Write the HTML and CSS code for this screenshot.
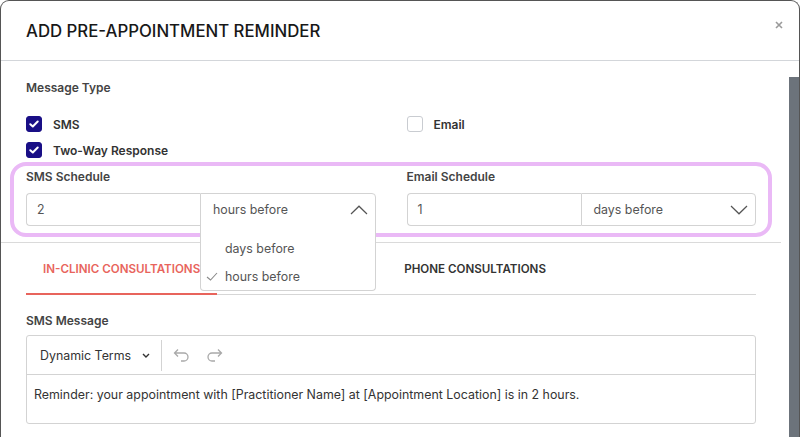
FILE: index.html
```html
<!DOCTYPE html>
<html lang="en">
<head>
    <meta charset="UTF-8">
    <meta name="viewport" content="width=device-width, initial-scale=1.0">
    <title>Add Pre-Appointment Reminder</title>
    <link rel="stylesheet" href="styles.css">
</head>
<body>
    <div class="modal">
        <div class="modal-header">
            <h1 class="modal-title">ADD PRE-APPOINTMENT REMINDER</h1>
            <button class="close" type="button" aria-label="Close">
                <svg width="8" height="8" viewBox="0 0 8 8"><path d="M1 1L7 7M7 1L1 7" stroke="#9a9a9a" stroke-width="1.6" fill="none"/></svg>
            </button>
        </div>

        <div class="modal-body">
            <div class="form">
                <div class="top">
                    <div class="field-label type-label">Message Type</div>
                    <div class="grid">
                        <div>
                            <label class="check">
                                <span class="box on"><svg width="10" height="8" viewBox="0 0 10 8"><path d="M1.3 4.2L3.8 6.5L8.7 1.5" stroke="#fff" stroke-width="2" fill="none" stroke-linecap="round" stroke-linejoin="round"/></svg></span>
                                SMS
                            </label>
                            <label class="check">
                                <span class="box on"><svg width="10" height="8" viewBox="0 0 10 8"><path d="M1.3 4.2L3.8 6.5L8.7 1.5" stroke="#fff" stroke-width="2" fill="none" stroke-linecap="round" stroke-linejoin="round"/></svg></span>
                                Two-Way Response
                            </label>
                        </div>
                        <div>
                            <label class="check">
                                <span class="box"></span>
                                Email
                            </label>
                        </div>
                    </div>

                    <!-- schedule row (highlighted) -->
                    <div class="highlight">
                        <div class="grid">
                            <div>
                                <div class="field-label sched-label">SMS Schedule</div>
                                <div class="input-group">
                                    <div class="num">2</div>
                                    <div class="select open">
                                        <span>hours before</span>
                                        <svg width="18" height="10" viewBox="0 0 18 10"><path d="M1 9L9 1.2L17 9" stroke="#555" stroke-width="1.2" fill="none"/></svg>
                                        <ul class="menu">
                                            <li>days before</li>
                                            <li>
                                                <svg class="tick" width="12" height="9" viewBox="0 0 12 9"><path d="M1 5L4.5 8L11 1" stroke="#8a8a8a" stroke-width="1.1" fill="none"/></svg>
                                                hours before
                                            </li>
                                        </ul>
                                    </div>
                                </div>
                            </div>
                            <div>
                                <div class="field-label sched-label">Email Schedule</div>
                                <div class="input-group">
                                    <div class="num">1</div>
                                    <div class="select">
                                        <span>days before</span>
                                        <svg width="18" height="10" viewBox="0 0 18 10"><path d="M1 1L9 8.8L17 1" stroke="#555" stroke-width="1.2" fill="none"/></svg>
                                    </div>
                                </div>
                            </div>
                        </div>
                    </div>
                </div>

                <div class="tabs-wrap">
                    <div class="tabs">
                        <div class="tab active">In-Clinic Consultations</div>
                        <div class="tab phone">Phone Consultations</div>
                    </div>
                </div>

                <div class="message">
                    <div class="field-label">SMS Message</div>
                    <div class="editor">
                        <div class="toolbar">
                            <div class="terms">
                                Dynamic Terms
                                <svg width="8" height="5" viewBox="0 0 8 5"><path d="M1 1L4 4L7 1" stroke="#333" stroke-width="1.4" fill="none"/></svg>
                            </div>
                            <div class="sep"></div>
                            <svg class="hist" width="17" height="14" viewBox="0 0 17 14"><path d="M5 1.5L1.5 5L5 8.5M1.5 5H11A4 4 0 0 1 11 13H8" stroke="#a9a9a9" stroke-width="1.3" fill="none"/></svg>
                            <svg class="hist redo" width="17" height="14" viewBox="0 0 17 14"><path d="M12 1.5L15.5 5L12 8.5M15.5 5H6A4 4 0 0 0 6 13H9" stroke="#a9a9a9" stroke-width="1.3" fill="none"/></svg>
                        </div>
                        <div class="editor-text">Reminder: your appointment with [Practitioner Name] at [Appointment Location] is in 2 hours.</div>
                    </div>
                </div>
            </div>

            <div class="scroll-track">
                <div class="scroll-thumb"></div>
            </div>
        </div>
    </div>
</body>
</html>
```

FILE: styles.css
```css
/* General Styles */
body {
    margin: 0;
    font-family: Inter, "Noto Sans", sans-serif;
    background-color: #fff;
    overflow: hidden;
}

.modal {
    width: 800px;
    height: 480px;
    box-sizing: border-box;
    border: 1px solid #555;
    border-bottom: none;
    border-radius: 9px 9px 0 0;
    background-color: #fff;
}

.modal-header {
    height: 59px;
    border-bottom: 1px solid #d3d6da;
    display: flex;
    align-items: center;
    justify-content: space-between;
    padding: 0 16px 0 25px;
}

.modal-title {
    margin: 0;
    font-size: 16.8px;
    font-weight: 500;
    color: #181818;
}

.close {
    align-self: flex-start;
    margin-top: 20px;
    border: none;
    background: none;
    padding: 0;
    display: flex;
    cursor: pointer;
}

.modal-body {
    display: flex;
}

.form {
    flex: 1;
}

.scroll-track {
    width: 18px;
    flex: none;
}

.scroll-thumb {
    width: 10px;
    height: 400px;
    margin: 16px 0 0 8px;
    background-color: #6c737b;
}

/* Message type + schedule */
.top {
    padding: 19px 25px 0;
    border-bottom: 1px solid #dadada;
}

.field-label {
    font-size: 12px;
    font-weight: 600;
    line-height: 16px;
    color: #444;
}

.type-label {
    margin-bottom: 15px;
}

.grid {
    display: grid;
    grid-template-columns: 1fr 1fr;
    column-gap: 31px;
}

.check {
    display: flex;
    align-items: center;
    gap: 11px;
    height: 26px;
    font-size: 12px;
    font-weight: 600;
    color: #333;
}

.box {
    width: 16px;
    height: 16px;
    box-sizing: border-box;
    border: 1px solid #c9ccd1;
    border-radius: 3px;
    background-color: #fff;
    display: flex;
    align-items: center;
    justify-content: center;
}

.box.on {
    background-color: #190f86;
    border-color: #190f86;
}

.highlight {
    margin: -1px -16px 5px;
    padding: 3px 12px 7px;
    border: 4px solid #eab9f6;
    border-radius: 16px;
}

.sched-label {
    margin-bottom: 8px;
}

.input-group {
    display: flex;
    height: 33px;
}

.num {
    flex: none;
    width: 174px;
    box-sizing: border-box;
    border: 1px solid #d3d3d3;
    border-right: none;
    border-radius: 4px 0 0 4px;
    padding-left: 10px;
    display: flex;
    align-items: center;
    font-size: 12.4px;
    color: #555;
}

.select {
    flex: 1;
    position: relative;
    border: 1px solid #d3d3d3;
    border-radius: 0 4px 4px 0;
    padding: 0 7px 0 12px;
    display: flex;
    align-items: center;
    justify-content: space-between;
    font-size: 12.4px;
    color: #555;
}

.select.open {
    border-radius: 0 4px 0 0;
}

.menu {
    position: absolute;
    top: 100%;
    left: -1px;
    right: -1px;
    z-index: 2;
    margin: 0;
    padding: 9px 0 0;
    list-style: none;
    background-color: #fff;
    border: 1px solid #d3d3d3;
    border-top: none;
    border-radius: 0 0 4px 4px;
}

.menu li {
    position: relative;
    height: 28px;
    padding-left: 24px;
    display: flex;
    align-items: center;
    font-size: 12.4px;
    color: #555;
}

.tick {
    position: absolute;
    left: 5px;
    top: 10px;
}

/* Tabs */
.tabs-wrap {
    padding: 0 25px;
}

.tabs {
    display: flex;
    border-bottom: 1px solid #d6d6d6;
}

.tab {
    padding: 18px 17px 16px;
    font-size: 11.6px;
    font-weight: 600;
    line-height: 16px;
    color: #333;
    text-transform: uppercase;
}

.tab.active {
    color: #e8645c;
    border-bottom: 2px solid #e8645c;
    margin-bottom: -1px;
}

.tab.phone {
    margin-left: 170px;
}

/* SMS message editor */
.message {
    padding: 18px 25px 0;
}

.editor {
    margin-top: 6px;
    border: 1px solid #d3d3d3;
    border-radius: 3px;
}

.toolbar {
    height: 38px;
    border-bottom: 1px solid #d3d3d3;
    display: flex;
    align-items: center;
    padding-left: 13px;
}

.terms {
    display: flex;
    align-items: center;
    gap: 11px;
    font-size: 12.4px;
    color: #333;
}

.sep {
    width: 1px;
    height: 31px;
    background-color: #d3d3d3;
    margin: 0 11px 0 11px;
}

.hist.redo {
    margin-left: 16px;
}

.editor-text {
    padding: 10px 7px 18px;
    font-size: 12.4px;
    line-height: 20px;
    color: #333;
}
```
